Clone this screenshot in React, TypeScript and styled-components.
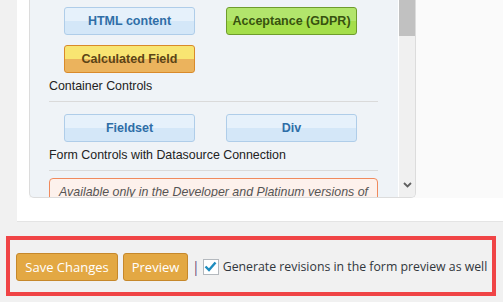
import React from 'react';
import styled, { createGlobalStyle, css } from 'styled-components';

const GlobalStyle = createGlobalStyle`
  html, body {
    margin: 0;
    padding: 0;
    background: #f1f1f1;
    width: 503px;
    height: 302px;
    overflow: hidden;
  }
  body {
    font-family: "Open Sans", "Liberation Sans", sans-serif;
  }
`;

const Panel = styled.div`
  margin-left: 17px;
  height: 222px;
  background: #fff;
  border-bottom: 1px solid #e4e4e4;
  padding-left: 12px;
  box-sizing: border-box;
`;

const FieldsArea = styled.div`
  display: flex;
  height: 198px;
  background: #fafafa;
`;

const ScrollBox = styled.div`
  display: flex;
  width: 387px;
  height: 198px;
  box-sizing: border-box;
  border: 1px solid #dcdcdc;
  border-top: none;
  border-radius: 0 0 5px 5px;
  background: #eff3f7;
  overflow: hidden;
`;

const Content = styled.div`
  flex: 1;
  padding: 7px 20px 0 19px;
  overflow: hidden;
  font-family: "Liberation Sans", Arial, sans-serif;
  font-size: 12px;
  color: #222;
`;

const ButtonGrid = styled.div`
  display: grid;
  grid-template-columns: 131px 131px;
  column-gap: 31px;
  row-gap: 10px;
  padding-left: 15px;
`;

type Tone = 'blue' | 'green' | 'yellow';

const tones = {
  blue: css`
    background: linear-gradient(#e6f1fb 0%, #e6f1fb 50%, #d4e7f8 50%, #d4e7f8 100%);
    border-color: #afcde9;
    color: #2f6ea7;
  `,
  green: css`
    background: linear-gradient(#b2e56c 0%, #b2e56c 50%, #a4de4a 50%, #a4de4a 100%);
    border-color: #6e9c2c;
    color: #37520f;
  `,
  yellow: css`
    background: linear-gradient(#f8e572 0%, #f8e572 50%, #ebb35d 50%, #ebb35d 100%);
    border-color: #d98a2a;
    color: #5b4416;
  `,
};

const FieldButton = styled.div<{ $tone: Tone }>`
  height: 28px;
  box-sizing: border-box;
  border: 1px solid;
  border-radius: 3px;
  display: flex;
  align-items: center;
  justify-content: center;
  font-weight: bold;
  font-size: 12.5px;
  ${(p) => tones[p.$tone]}
`;

const GroupLabel = styled.div`
  margin-top: 5px;
  line-height: 16px;
  font-size: 12.4px;
  color: #222;
`;

const Separator = styled.div`
  height: 1px;
  background: #dadada;
  margin: 7px 0 12px;
`;

const Notice = styled.div`
  margin-top: -5px;
  border: 1px solid #f08a5d;
  border-radius: 4px;
  background: #fdf1ec;
  padding: 5px 3px 5px 9px;
  font-style: italic;
  color: #555;
  font-size: 12.4px;
  line-height: 16px;
`;

const Scrollbar = styled.div`
  width: 16px;
  background: #f0f0f0;
  border-left: 1px solid #fff;
  display: flex;
  flex-direction: column;
`;

const Thumb = styled.div`
  height: 36px;
  background: #c1c1c1;
`;

const Track = styled.div`
  flex: 1;
`;

const ArrowBox = styled.div`
  height: 17px;
  display: flex;
  align-items: center;
  justify-content: center;
  padding-bottom: 4px;
`;

const BarFrame = styled.div`
  margin: 14px 0 0 6px;
  width: 490px;
  height: 60px;
  box-sizing: border-box;
  border: 4px solid #f04446;
  display: flex;
  align-items: center;
  padding: 1px 0 0 6px;
  gap: 5px;
`;

const ActionButton = styled.button<{ $w: number }>`
  width: ${(p) => p.$w}px;
  height: 28px;
  box-sizing: border-box;
  background: #e3a843;
  border: 1px solid #c6882b;
  border-radius: 3px;
  color: #fff;
  font-family: "Open Sans", "Liberation Sans", sans-serif;
  font-size: 13px;
  padding: 0;
`;

const Pipe = styled.span`
  color: #6a4a7a;
  font-size: 14px;
  margin-left: -1px;
`;

const CheckLabel = styled.label`
  display: flex;
  align-items: center;
  gap: 4px;
  margin-left: -2px;
  color: #32373c;
  font-size: 12.3px;
  white-space: nowrap;
`;

const CheckBox = styled.span`
  width: 16px;
  height: 16px;
  box-sizing: border-box;
  border: 1px solid #b4b9be;
  background: #fff;
  display: flex;
  align-items: center;
  justify-content: center;
  flex-shrink: 0;
`;

const rows: { label: string; buttons: { text: string; tone: Tone }[] }[] = [
  {
    label: 'Container Controls',
    buttons: [
      { text: 'HTML content', tone: 'blue' },
      { text: 'Acceptance (GDPR)', tone: 'green' },
      { text: 'Calculated Field', tone: 'yellow' },
    ],
  },
  {
    label: 'Form Controls with Datasource Connection',
    buttons: [
      { text: 'Fieldset', tone: 'blue' },
      { text: 'Div', tone: 'blue' },
    ],
  },
];

export default function App() {
  return (
    <>
      <GlobalStyle />
      <Panel>
        <FieldsArea>
          <ScrollBox>
            <Content>
              {rows.map((row) => (
                <div key={row.label}>
                  <ButtonGrid>
                    {row.buttons.map((b) => (
                      <FieldButton key={b.text} $tone={b.tone}>
                        {b.text}
                      </FieldButton>
                    ))}
                  </ButtonGrid>
                  <GroupLabel>{row.label}</GroupLabel>
                  <Separator />
                </div>
              ))}
              <Notice>Available only in the Developer and Platinum versions of the plugin</Notice>
            </Content>
            <Scrollbar>
              <Thumb />
              <Track />
              <ArrowBox>
                <svg width="9" height="6" viewBox="0 0 9 6">
                  <path d="M1 1 L4.5 4.5 L8 1" stroke="#606060" strokeWidth="1.8" fill="none" />
                </svg>
              </ArrowBox>
            </Scrollbar>
          </ScrollBox>
        </FieldsArea>
      </Panel>
      <BarFrame>
        <ActionButton $w={102}>Save Changes</ActionButton>
        <ActionButton $w={65}>Preview</ActionButton>
        <Pipe>|</Pipe>
        <CheckLabel>
          <CheckBox>
            <svg width="13" height="11" viewBox="0 0 13 11">
              <path d="M1.5 5.5 L5 9 L11.5 1.5" stroke="#1e8cbe" strokeWidth="2.4" fill="none" />
            </svg>
          </CheckBox>
          Generate revisions in the form preview as well
        </CheckLabel>
      </BarFrame>
    </>
  );
}
